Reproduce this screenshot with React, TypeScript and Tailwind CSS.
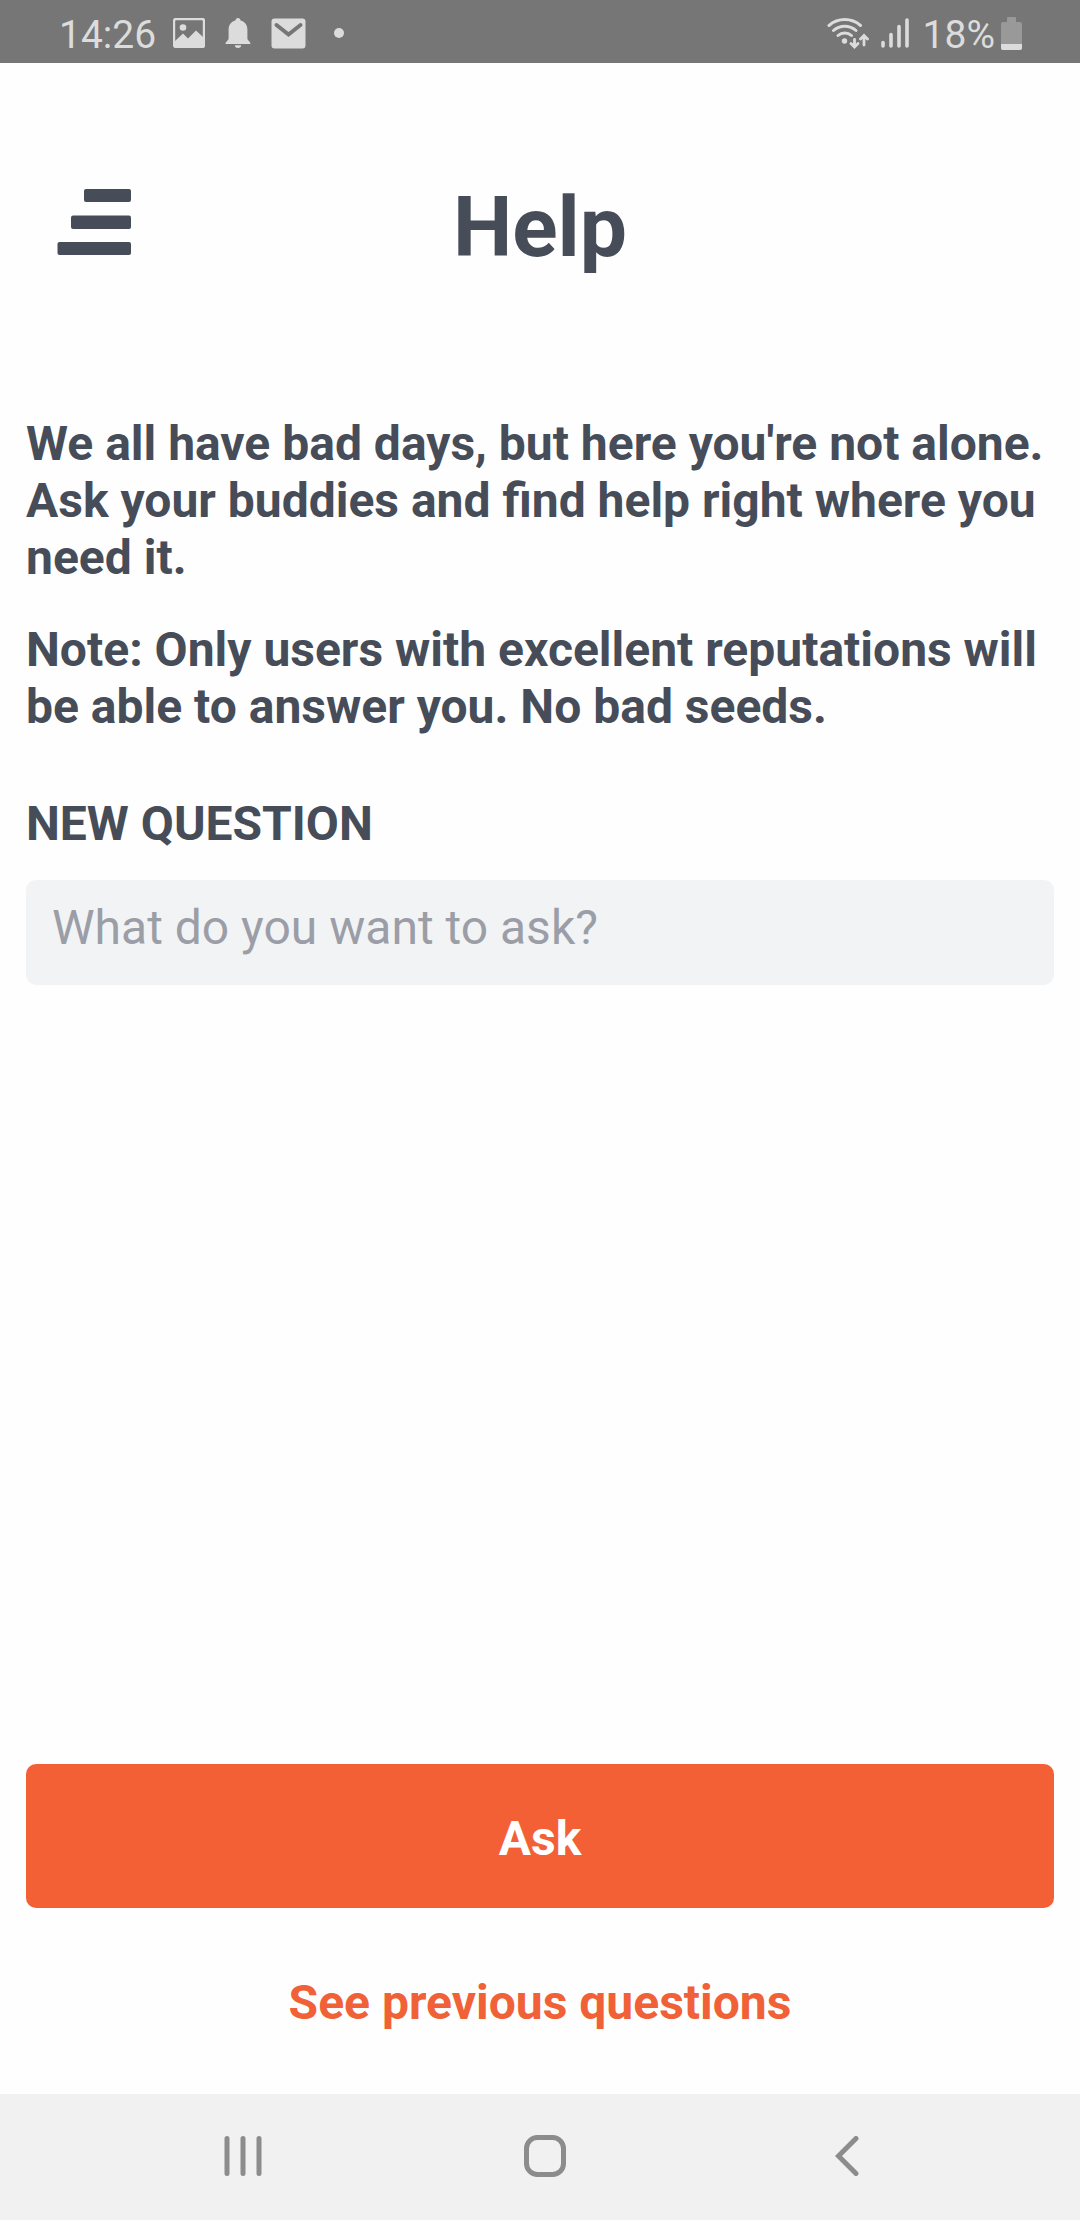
import React from "react";

function PictureIcon() {
  return (
    <svg width="32" height="30" viewBox="0 0 32 30" aria-hidden="true">
      <rect x="1" y="1" width="30" height="28" rx="2" fill="none" stroke="#dcdcdc" strokeWidth="2.400" />
      <circle cx="10" cy="9.500" r="3.300" fill="#dcdcdc" />
      <path d="M2 23 10 15.500 15 20.500 23 12.500 30 19V28H2Z" fill="#dcdcdc" />
    </svg>
  );
}

function BellIcon() {
  return (
    <svg width="26" height="30" viewBox="0 0 26 30" aria-hidden="true">
      <path
        d="M13 0c1.500 0 2.400 1 2.600 2.600C20 4 22.400 7 22.400 12v8.500c0 2 3.100 3 3.100 5.500H.5c0-2.500 3.100-3.500 3.100-5.500V12c0-5 2.400-8 6.800-9.400C10.600 1 11.500 0 13 0ZM9.800 27.200h6.400C16 29 15 30 13 30s-3-1-3.200-2.800Z"
        fill="#dcdcdc"
      />
    </svg>
  );
}

function MailIcon() {
  return (
    <svg width="35" height="31" viewBox="0 0 35 31" aria-hidden="true">
      <rect x="0.500" y="0.500" width="34" height="30" rx="3" fill="#dcdcdc" />
      <path d="m5.500 7 12 9.500 12-9.500" fill="none" stroke="#767676" strokeWidth="4" strokeLinecap="round" />
    </svg>
  );
}

function WifiIcon() {
  return (
    <svg width="42" height="33" viewBox="0 0 42 33" aria-hidden="true">
      <g fill="none" stroke="#dcdcdc" strokeWidth="3" strokeLinecap="round">
        <path d="M2 8.500a24 24 0 0 1 31.500 0" />
        <path d="M6.500 13.500a17 17 0 0 1 22.500 0" />
        <path d="M11 18.500a10 10 0 0 1 13.500 0" />
        <path d="M27.500 22.500v7M24 26.500l3.500 3.500 3.500-3.500M37 28v-9M33.500 22 37 18.500l3.500 3.500" strokeWidth="2.800" />
      </g>
      <circle cx="17.500" cy="24" r="2.700" fill="#dcdcdc" />
    </svg>
  );
}

function SignalIcon() {
  return (
    <svg width="28" height="30" viewBox="0 0 28 30" aria-hidden="true">
      <path d="M2 24.500v3.500M10 16.500V28M18 8.500V28M26 2v26" stroke="#dcdcdc" strokeWidth="3.600" strokeLinecap="round" />
    </svg>
  );
}

function BatteryIcon() {
  return (
    <svg width="21" height="33" viewBox="0 0 21 33" aria-hidden="true">
      <path d="M7 0h7a1 1 0 0 1 1 1v4h4a2 2 0 0 1 2 2v24a2 2 0 0 1-2 2H2a2 2 0 0 1-2-2V7a2 2 0 0 1 2-2h4V1a1 1 0 0 1 1-1Z" fill="#999999" />
      <path d="M0 27h21v4a2 2 0 0 1-2 2H2a2 2 0 0 1-2-2Z" fill="#dcdcdc" />
    </svg>
  );
}

function StatusBar() {
  return (
    <div className="flex h-[63px] items-center justify-between bg-[#767676] pt-[3px] pr-[58px] pl-[59px] text-[39px] leading-[48px] text-[#dcdcdc]">
      <div className="flex items-center">
        <span className="pt-[3px]">14:26</span>
        <span className="ml-[17px] flex items-center gap-5">
          <PictureIcon />
          <BellIcon />
          <MailIcon />
        </span>
        <span className="ml-7 size-[10px] rounded-full bg-[#dcdcdc]" />
      </div>
      <div className="flex items-center">
        <span className="flex items-center gap-3">
          <WifiIcon />
          <SignalIcon />
        </span>
        <span className="ml-[14px] pt-[3px]">18%</span>
        <span className="ml-[6px]">
          <BatteryIcon />
        </span>
      </div>
    </div>
  );
}

function Header() {
  return (
    <header className="grid grid-cols-[1fr_auto_1fr] items-start px-[57px] pt-[115px] pb-[137px]">
      <button type="button" aria-label="Menu" className="mt-[11px] justify-self-start">
        <svg className="block" width="74" height="66" viewBox="0 0 74 66" fill="#464d59" aria-hidden="true">
          <rect x="27" y="0" width="47" height="13" rx="2" />
          <rect x="14" y="26.500" width="60" height="13.500" rx="2" />
          <rect x="0.500" y="53" width="73.500" height="13" rx="2" />
        </svg>
      </button>
      <h1 className="text-[84px] leading-[100px] font-bold">Help</h1>
    </header>
  );
}

function NavBar() {
  return (
    <nav className="grid h-[126px] grid-cols-3 items-center bg-[#f1f1f1] pr-[82px] pb-[2px] pl-[92px]" aria-label="System">
      <button type="button" aria-label="Recent apps" className="justify-self-center">
        <svg className="block" width="38" height="40" viewBox="0 0 38 40" aria-hidden="true">
          <path d="M3 2.500v35M19 2.500v35M35 2.500v35" stroke="#8c8c8c" strokeWidth="5" strokeLinecap="round" />
        </svg>
      </button>
      <button type="button" aria-label="Home" className="justify-self-center">
        <svg className="block" width="42" height="42" viewBox="0 0 42 42" aria-hidden="true">
          <rect x="2.500" y="2.500" width="37" height="37" rx="11" fill="none" stroke="#8c8c8c" strokeWidth="5" />
        </svg>
      </button>
      <button type="button" aria-label="Back" className="justify-self-center">
        <svg className="block" width="24" height="40" viewBox="0 0 24 40" aria-hidden="true">
          <path d="M21 2.500 3.500 20 21 37.500" fill="none" stroke="#8c8c8c" strokeWidth="5" strokeLinecap="round" />
        </svg>
      </button>
    </nav>
  );
}

export default function App() {
  return (
    <div className="flex min-h-screen flex-col bg-[#fefefe] font-[Roboto,sans-serif] text-[#464d59]">
      <StatusBar />
      <Header />
      <main className="flex flex-1 flex-col px-[26px] text-[48px] leading-[57px]">
        <p className="font-bold">
          We all have bad days, but here you're not alone. Ask your buddies and find help right where you need it.
        </p>
        <p className="mt-[35px] font-bold">
          Note: Only users with excellent reputations will be able to answer you. No bad seeds.
        </p>
        <label htmlFor="question" className="mt-[60px] font-bold">
          NEW QUESTION
        </label>
        <input
          id="question"
          type="text"
          placeholder="What do you want to ask?"
          className="mt-7 w-full rounded-[10px] bg-[#f2f3f5] px-[26px] pt-[19px] pb-[29px] leading-[57px] outline-none placeholder:text-[#9b9ea6]"
        />
        <button type="button" className="mt-auto w-full rounded-[10px] bg-[#f46036] pt-[46px] pb-[41px] font-bold text-white">
          Ask
        </button>
        <a href="#previous" className="mt-[66px] mb-[63px] self-center font-bold text-[#f06137]">
          See previous questions
        </a>
      </main>
      <NavBar />
    </div>
  );
}
